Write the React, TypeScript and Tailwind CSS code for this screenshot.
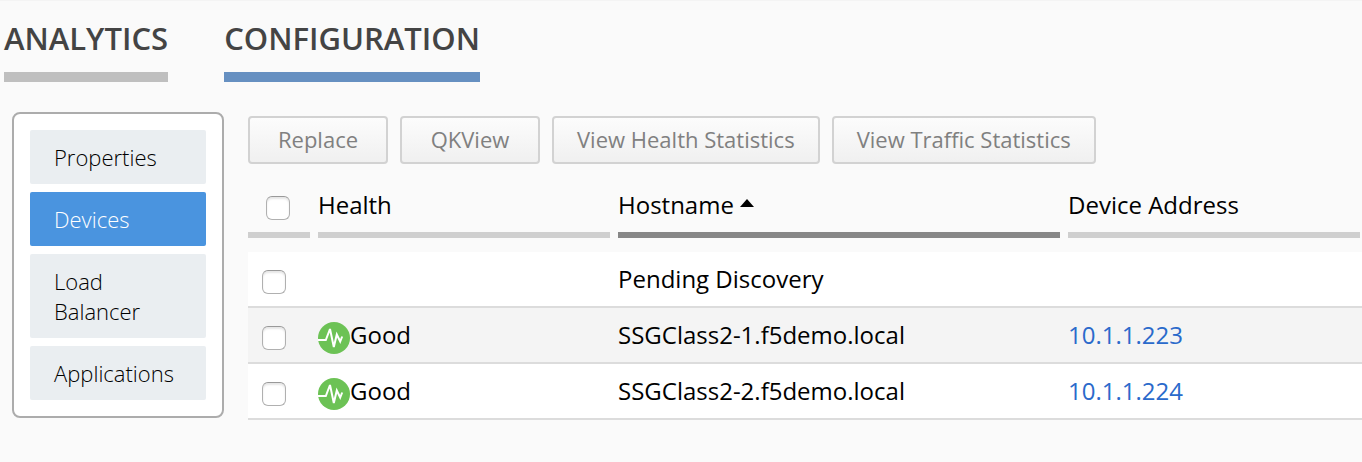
import { useState } from "react";

const tabs = [
  { label: "ANALYTICS", bar: "border-[#bfbfbf]", current: false },
  { label: "CONFIGURATION", bar: "border-[#6690c1]", current: true },
];

const sections = ["Properties", "Devices", "Load Balancer", "Applications"];

const actions = ["Replace", "QKView", "View Health Statistics", "View Traffic Statistics"];

const devices = [
  { hostname: "Pending Discovery", health: "", address: "" },
  { hostname: "SSGClass2-1.f5demo.local", health: "Good", address: "10.1.1.223" },
  { hostname: "SSGClass2-2.f5demo.local", health: "Good", address: "10.1.1.224" },
];

function HealthIcon() {
  return (
    <svg viewBox="0 0 32 32" className="mt-1.5 size-8 shrink-0" aria-hidden="true">
      <circle cx="16" cy="16" r="16" fill="#6cc255" />
      <path
        d="M0 18H7.8L12 7L15.8 25L18.8 12.5L22.2 19.5L24.2 14.5"
        fill="none"
        stroke="#fff"
        strokeWidth="2"
        strokeMiterlimit="3"
      />
    </svg>
  );
}

function Checkbox({ label }: { label: string }) {
  return (
    <input
      type="checkbox"
      aria-label={label}
      className="block size-6 appearance-none rounded-md border border-[#b0b0b0] border-t-[#999999] bg-white shadow-[inset_0_2px_2px_#e6e6e6] checked:bg-[#4a94df]"
    />
  );
}

export default function App() {
  const [section, setSection] = useState("Devices");

  return (
    <div className="min-h-screen border-t border-[#f4f4f4] bg-[#fafafa] font-['Open_Sans',sans-serif] text-2xl text-black">
      <nav className="flex gap-14 pl-1 pt-[13px]">
        {tabs.map((tab) => (
          <a
            key={tab.label}
            href="#"
            aria-current={tab.current ? "page" : undefined}
            className={`border-b-10 pb-2.5 text-[31px] leading-12 font-semibold text-[#444444] ${tab.bar}`}
          >
            {tab.label}
          </a>
        ))}
      </nav>

      <div className="flex items-start gap-6 pt-[30px] pl-3">
        <nav className="flex w-[212px] shrink-0 flex-col gap-2 rounded-lg border-2 border-[#acacac] bg-white p-4">
          {sections.map((name) => (
            <button
              key={name}
              type="button"
              onClick={() => setSection(name)}
              className={`rounded-xs px-6 py-3 text-left text-[22px] leading-[30px] ${
                name === section ? "bg-[#4a94df] font-light text-white" : "bg-[#eaeef1] font-light"
              }`}
            >
              {name}
            </button>
          ))}
        </nav>

        <main className="min-w-0 flex-1 pt-1">
          <div className="flex flex-wrap gap-3">
            {actions.map((name) => (
              <button
                key={name}
                type="button"
                disabled
                className="h-12 min-w-[140px] rounded-sm border-2 border-[#d2d2d2] bg-linear-to-b from-[#fcfcfc] to-[#f0f0f0] px-[23px] text-[22px] text-[#808080]"
              >
                {name}
              </button>
            ))}
          </div>

          <table className="mt-4 w-full table-fixed border-separate border-spacing-0 text-left">
            <colgroup>
              <col className="w-[70px]" />
              <col className="w-[300px]" />
              <col className="w-[450px]" />
              <col />
            </colgroup>
            <thead>
              <tr>
                <th className="p-0 pb-3.5 font-normal">
                  <div className="mr-2 flex h-[58px] items-center border-b-6 border-[#cfcfcf] pt-1 pl-[18px]">
                    <Checkbox label="Select all devices" />
                  </div>
                </th>
                <th className="p-0 pb-3.5 font-normal">
                  <div className="mr-2 flex h-[58px] items-center border-b-6 border-[#cfcfcf] pb-0.5">Health</div>
                </th>
                <th className="p-0 pb-3.5 font-normal" aria-sort="ascending">
                  <div className="mr-2 flex h-[58px] items-center gap-1.5 border-b-6 border-[#878787] pb-0.5">
                    Hostname
                    <svg viewBox="0 0 14 8" className="mb-1 h-2 w-3.5" aria-hidden="true">
                      <path d="M7 0L14 8H0Z" />
                    </svg>
                  </div>
                </th>
                <th className="p-0 pb-3.5 font-normal">
                  <div className="mr-0.5 flex h-[58px] items-center border-b-6 border-[#cfcfcf] pb-0.5">Device Address</div>
                </th>
              </tr>
            </thead>
            <tbody>
              {devices.map((device) => (
                <tr key={device.hostname} className="h-14 bg-white even:bg-[#f4f4f4]">
                  <td className="border-b-2 border-[#dcdcdc] p-0 pt-1.5 pl-3.5">
                    <Checkbox label={`Select ${device.hostname}`} />
                  </td>
                  <td className="border-b-2 border-[#dcdcdc] p-0">
                    {device.health && (
                      <div className="flex items-center">
                        <HealthIcon />
                        {device.health}
                      </div>
                    )}
                  </td>
                  <td className="border-b-2 border-[#dcdcdc] p-0">{device.hostname}</td>
                  <td className="border-b-2 border-[#dcdcdc] p-0">
                    {device.address && (
                      <a href="#" className="text-[#2a6acb]">
                        {device.address}
                      </a>
                    )}
                  </td>
                </tr>
              ))}
            </tbody>
          </table>
        </main>
      </div>
    </div>
  );
}
